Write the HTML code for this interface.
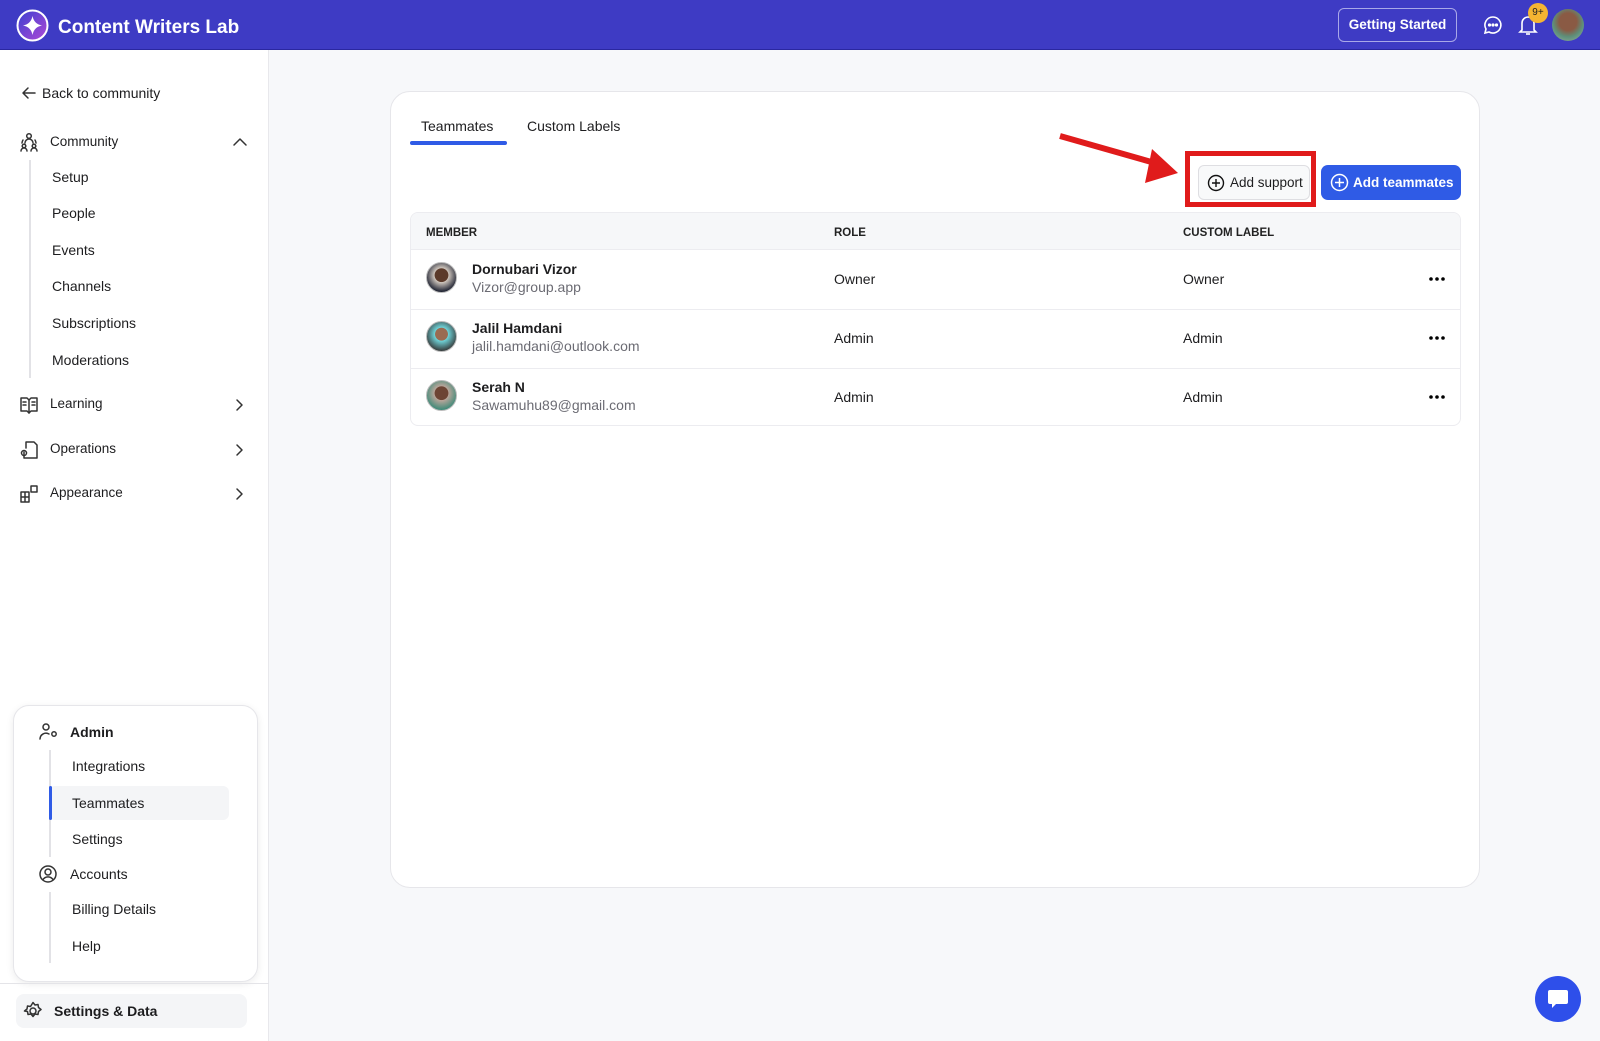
<!DOCTYPE html>
<html><head><meta charset="utf-8"><style>
*{box-sizing:border-box;margin:0;padding:0}
body{width:1600px;height:1041px;position:relative;overflow:hidden;background:#f7f8fa;font-family:"Liberation Sans",sans-serif;color:#1d1d1f}
.a{position:absolute}
.t{position:absolute;font-size:14px;line-height:18px;white-space:nowrap}
.ic{position:absolute;fill:none;stroke:#333;stroke-width:1.5;stroke-linecap:round;stroke-linejoin:round}
</style></head><body>
<div class="a" style="left:0;top:0;width:1600px;height:50px;background:#3e3bc4;border-bottom:1px solid #2a27a0"></div>
<svg class="a" style="left:16px;top:9px" width="33" height="33" viewBox="0 0 33 33"><defs><linearGradient id="g" x1="0" y1="0" x2="1" y2="1"><stop offset="0" stop-color="#3b3fd0"/><stop offset="1" stop-color="#b04ad6"/></linearGradient></defs><circle cx="16.5" cy="16.5" r="15" fill="url(#g)" stroke="#fff" stroke-width="2"/><path d="M16.5 7 Q18 15 26 16.5 Q18 18 16.5 26 Q15 18 7 16.5 Q15 15 16.5 7Z" fill="#fff"/></svg>
<div class="t" style="left:58px;top:17px;font-size:19px;line-height:22px;font-weight:bold;color:#fff">Content Writers Lab</div>
<div class="a" style="left:1338px;top:8px;width:119px;height:34px;border:1px solid #a9a8e8;border-radius:6px;color:#fff;font-size:13.5px;font-weight:bold;text-align:center;line-height:32px">Getting Started</div>
<svg class="a" style="left:1482px;top:14px" width="22" height="22" viewBox="0 0 22 22" fill="none" stroke="#fff" stroke-width="1.6"><path d="M11 3a8 8 0 1 1-4 15l-4 1 1-4A8 8 0 0 1 11 3z"/><circle cx="7.5" cy="11" r=".8" fill="#fff"/><circle cx="11" cy="11" r=".8" fill="#fff"/><circle cx="14.5" cy="11" r=".8" fill="#fff"/></svg>
<svg class="a" style="left:1517px;top:13px" width="22" height="24" viewBox="0 0 22 24" fill="none" stroke="#fff" stroke-width="1.6"><path d="M5 17V10a6 6 0 0 1 12 0v7l2 2H3z"/><path d="M9 21h4"/></svg>
<div class="a" style="left:1528px;top:3px;width:20px;height:20px;border-radius:50%;background:#f5b532;color:#222;font-size:10px;text-align:center;line-height:20px">9+</div>
<div class="a" style="left:1552px;top:9px;width:32px;height:32px;border-radius:50%;background:radial-gradient(circle at 50% 40%,#8a5a44 0 35%,#5d8f7a 60%,#9bb0a0)"></div>
<div class="a" style="left:0;top:50px;width:269px;height:991px;background:#fff;border-right:1px solid #e8e8ec"></div>
<svg class="ic" style="left:20px;top:84px" width="18" height="18" viewBox="0 0 18 18"><path d="M15 9H3M8 4 3 9l5 5"/></svg>
<div class="t" style="left:42px;top:84px">Back to community</div>
<svg class="ic" style="left:19px;top:132px" width="20" height="20" viewBox="0 0 20 20"><circle cx="10" cy="4" r="2.3"/><path d="M6 11a4 4 0 0 1 8 0"/><circle cx="5" cy="14" r="1.8"/><circle cx="15" cy="14" r="1.8"/><path d="M2 19a3 3 0 0 1 6 0M12 19a3 3 0 0 1 6 0M4 8a6 6 0 0 0-1 3M16 8a6 6 0 0 1 1 3"/></svg>
<div class="t" style="left:50px;top:133px;font-size:13.5px">Community</div>
<svg class="ic" style="left:232px;top:136px" width="16" height="12" viewBox="0 0 16 12"><path d="M2 9l6-6 6 6"/></svg>
<div class="a" style="left:29px;top:160px;width:2px;height:218px;background:#e2e2e6"></div>
<div class="t" style="left:52px;top:168px">Setup</div>
<div class="t" style="left:52px;top:204px">People</div>
<div class="t" style="left:52px;top:241px">Events</div>
<div class="t" style="left:52px;top:277px">Channels</div>
<div class="t" style="left:52px;top:314px">Subscriptions</div>
<div class="t" style="left:52px;top:351px">Moderations</div>
<svg class="ic" style="left:19px;top:396px" width="20" height="18" viewBox="0 0 20 18"><path d="M2 2h6l2 2 2-2h6v13h-6l-2 2-2-2H2z"/><path d="M10 4v13M4 6h3M4 9h3M13 6h3M13 9h3"/></svg>
<div class="t" style="left:50px;top:395px;font-size:13.5px">Learning</div>
<svg class="ic" style="left:234px;top:398px" width="10" height="14" viewBox="0 0 10 14"><path d="M3 2l5 5-5 5"/></svg>
<svg class="ic" style="left:19px;top:440px" width="20" height="20" viewBox="0 0 20 20"><path d="M7 2h8l3 3v13H5v-6M7 2v6"/><circle cx="5" cy="13" r="2.5"/></svg>
<div class="t" style="left:50px;top:440px;font-size:13.5px">Operations</div>
<svg class="ic" style="left:234px;top:443px" width="10" height="14" viewBox="0 0 10 14"><path d="M3 2l5 5-5 5"/></svg>
<svg class="ic" style="left:19px;top:484px" width="20" height="20" viewBox="0 0 20 20"><path d="M2 8h8v10H2zM2 13h8M6 8v10M12 2h6v6h-6z"/></svg>
<div class="t" style="left:50px;top:484px;font-size:13.5px">Appearance</div>
<svg class="ic" style="left:234px;top:487px" width="10" height="14" viewBox="0 0 10 14"><path d="M3 2l5 5-5 5"/></svg>
<div class="a" style="left:13px;top:705px;width:245px;height:277px;background:#fff;border:1px solid #e6e6ea;border-radius:16px;box-shadow:0 2px 8px rgba(0,0,0,.08)"></div>
<svg class="ic" style="left:38px;top:722px" width="22" height="18" viewBox="0 0 22 18"><circle cx="8" cy="5" r="3"/><path d="M2 17a6 6 0 0 1 9-5"/><circle cx="16" cy="12" r="2.2"/></svg>
<div class="t" style="left:70px;top:723px;font-weight:bold">Admin</div>
<div class="a" style="left:49px;top:750px;width:2px;height:107px;background:#e2e2e6"></div>
<div class="t" style="left:72px;top:757px">Integrations</div>
<div class="a" style="left:49px;top:786px;width:180px;height:34px;background:#f4f5f7;border-radius:6px"></div>
<div class="a" style="left:49px;top:786px;width:3px;height:34px;background:#2f5be6;border-radius:2px"></div>
<div class="t" style="left:72px;top:794px">Teammates</div>
<div class="t" style="left:72px;top:830px">Settings</div>
<svg class="ic" style="left:38px;top:864px" width="20" height="20" viewBox="0 0 20 20"><circle cx="10" cy="10" r="8"/><circle cx="10" cy="8" r="3"/><path d="M5 15.5a6 6 0 0 1 10 0"/></svg>
<div class="t" style="left:70px;top:865px">Accounts</div>
<div class="a" style="left:49px;top:892px;width:2px;height:71px;background:#e2e2e6"></div>
<div class="t" style="left:72px;top:900px">Billing Details</div>
<div class="t" style="left:72px;top:937px">Help</div>
<div class="a" style="left:0;top:983px;width:269px;height:1px;background:#e4e4e8"></div>
<div class="a" style="left:16px;top:994px;width:231px;height:34px;background:#f4f5f7;border-radius:8px"></div>
<svg class="ic" style="left:23px;top:1001px" width="20" height="20" viewBox="0 0 20 20"><circle cx="10" cy="10" r="3"/><path d="M10 1.5l2 2.5 3-.5.5 3 2.5 2-2.5 2-.5 3-3-.5-2 2.5-2-2.5-3 .5-.5-3L1.5 10 4 8l.5-3 3 .5z"/></svg>
<div class="t" style="left:54px;top:1002px;font-weight:bold">Settings &amp; Data</div>
<div class="a" style="left:390px;top:91px;width:1090px;height:797px;background:#fff;border:1px solid #e6e6ea;border-radius:20px"></div>
<div class="t" style="left:421px;top:117px">Teammates</div>
<div class="a" style="left:410px;top:141px;width:97px;height:4px;background:#2f5be6;border-radius:2px"></div>
<div class="t" style="left:527px;top:117px">Custom Labels</div>
<svg class="a" style="left:1050px;top:125px" width="140" height="70" viewBox="0 0 140 70"><line x1="10" y1="11" x2="105" y2="38" stroke="#e01b1b" stroke-width="6"/><polygon points="128,48 102,24 95,58" fill="#e01b1b"/></svg>
<div class="a" style="left:1185px;top:151px;width:131px;height:56px;border:5px solid #e01b1b"></div>
<div class="a" style="left:1198px;top:165px;width:112px;height:35px;border:1px solid #dedee2;border-radius:6px;background:#f8f9fa"></div>
<svg class="a" style="left:1207px;top:174px" width="18" height="18" viewBox="0 0 18 18" fill="none" stroke="#111" stroke-width="1.4"><circle cx="9" cy="9" r="7.5"/><path d="M9 5v8M5 9h8"/></svg>
<div class="t" style="left:1230px;top:174px;font-size:13.5px">Add support</div>
<div class="a" style="left:1321px;top:165px;width:140px;height:35px;background:#2f5be6;border-radius:7px"></div>
<svg class="a" style="left:1330px;top:173px" width="19" height="19" viewBox="0 0 19 19" fill="none" stroke="#fff" stroke-width="1.5"><circle cx="9.5" cy="9.5" r="8"/><path d="M9.5 5v9M5 9.5h9"/></svg>
<div class="t" style="left:1353px;top:174px;color:#fff;font-weight:bold;font-size:13.5px">Add teammates</div>
<div class="a" style="left:410px;top:212px;width:1051px;height:214px;border:1px solid #ececf0;border-radius:8px;overflow:hidden">
 <div class="a" style="left:0;top:0;width:1051px;height:37px;background:#f6f7f9;border-bottom:1px solid #ececf0"></div>
 <div class="a" style="left:0;top:96px;width:1051px;height:1px;background:#ececf0"></div>
 <div class="a" style="left:0;top:155px;width:1051px;height:1px;background:#ececf0"></div>
</div>
<div class="t" style="left:426px;top:224px;font-size:11.5px;font-weight:bold;color:#222">MEMBER</div>
<div class="t" style="left:834px;top:224px;font-size:11.5px;font-weight:bold;color:#222">ROLE</div>
<div class="t" style="left:1183px;top:224px;font-size:11.5px;font-weight:bold;color:#222">CUSTOM LABEL</div>
<div class="a" style="left:426px;top:262px;width:31px;height:31px;border-radius:50%;border:1.5px solid #bbb;background:radial-gradient(circle at 50% 42%,#5b3a2a 0 30%,#cfc6bd 32%,#1c2030 75%)"></div>
<div class="t" style="left:472px;top:260px;font-weight:bold">Dornubari Vizor</div>
<div class="t" style="left:472px;top:278px;color:#6b6b73">Vizor@group.app</div>
<div class="t" style="left:834px;top:270px">Owner</div>
<div class="t" style="left:1183px;top:270px">Owner</div>
<div class="a" style="left:426px;top:321px;width:31px;height:31px;border-radius:50%;border:1.5px solid #bbb;background:radial-gradient(circle at 50% 42%,#9a6b52 0 28%,#6fd3d8 30%,#333 78%)"></div>
<div class="t" style="left:472px;top:319px;font-weight:bold">Jalil Hamdani</div>
<div class="t" style="left:472px;top:337px;color:#6b6b73">jalil.hamdani@outlook.com</div>
<div class="t" style="left:834px;top:329px">Admin</div>
<div class="t" style="left:1183px;top:329px">Admin</div>
<div class="a" style="left:426px;top:380px;width:31px;height:31px;border-radius:50%;border:1.5px solid #bbb;background:radial-gradient(circle at 50% 42%,#6d4434 0 30%,#b9a59a 32%,#3e8a78 75%)"></div>
<div class="t" style="left:472px;top:378px;font-weight:bold">Serah N</div>
<div class="t" style="left:472px;top:396px;color:#6b6b73">Sawamuhu89@gmail.com</div>
<div class="t" style="left:834px;top:388px">Admin</div>
<div class="t" style="left:1183px;top:388px">Admin</div>
<svg class="a" style="left:1428px;top:276px" width="18" height="6"><circle cx="3" cy="3" r="1.8"/><circle cx="9" cy="3" r="1.8"/><circle cx="15" cy="3" r="1.8"/></svg>
<svg class="a" style="left:1428px;top:335px" width="18" height="6"><circle cx="3" cy="3" r="1.8"/><circle cx="9" cy="3" r="1.8"/><circle cx="15" cy="3" r="1.8"/></svg>
<svg class="a" style="left:1428px;top:394px" width="18" height="6"><circle cx="3" cy="3" r="1.8"/><circle cx="9" cy="3" r="1.8"/><circle cx="15" cy="3" r="1.8"/></svg>
<div class="a" style="left:1535px;top:976px;width:46px;height:46px;border-radius:50%;background:#2e4fea"></div>
<svg class="a" style="left:1546px;top:987px" width="24" height="24" viewBox="0 0 24 24"><path d="M4 3h16a2 2 0 0 1 2 2v10a2 2 0 0 1-2 2H10l-4 4v-4H4a2 2 0 0 1-2-2V5a2 2 0 0 1 2-2z" fill="#fff"/></svg>
</body></html>
